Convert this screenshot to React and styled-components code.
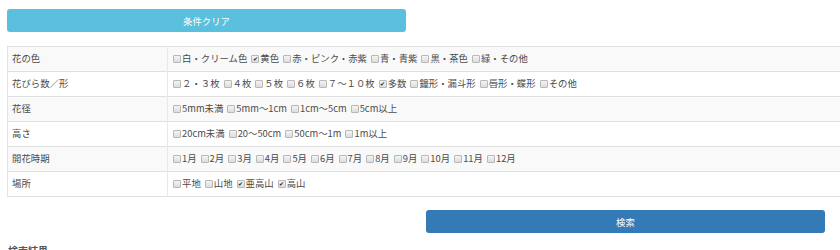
import React, { useState } from 'react';
import styled, { createGlobalStyle } from 'styled-components';

const GlobalStyle = createGlobalStyle`
  html, body {
    margin: 0;
    padding: 0;
    overflow: hidden;
    background: #fff;
  }
  body {
    font-family: "Noto Sans CJK JP", "Open Sans", sans-serif;
    font-size: 9.4px;
    color: #4a4a4a;
  }
`;

const Page = styled.div`
  padding: 9px 0 0 7px;
  width: 860px;
`;

const ButtonRow = styled.div`
  display: grid;
  grid-template-columns: 399px 399px;
  column-gap: 20px;
`;

const Button = styled.button`
  height: 23px;
  border: none;
  border-radius: 3px;
  background: ${p => p.$color};
  color: #fff;
  font-family: inherit;
  font-size: 9.4px;
  cursor: pointer;
  grid-column: ${p => p.$col};
`;

const Table = styled.table`
  width: 845px;
  border-collapse: collapse;
  margin: 14px 0 13px;
  border-left: 1px solid #e4e4e4;
`;

const Row = styled.tr`
  background: ${p => (p.$striped ? '#f9f9f9' : '#fff')};
  border-top: 1px solid #e0e0e0;
  &:last-child {
    border-bottom: 1px solid #e0e0e0;
  }
`;

const HeadCell = styled.td`
  width: 150px;
  height: 14px;
  padding: 4px 5px 6px 4px;
  line-height: 14px;
  vertical-align: top;
  border-right: 1px solid #e8e8e8;
  white-space: nowrap;
  overflow: hidden;
`;

const Cell = styled.td`
  height: 14px;
  padding: 4px 5px 6px;
  line-height: 14px;
  vertical-align: top;
  white-space: nowrap;
  overflow: hidden;
`;

const Option = styled.label`
  display: inline-block;
  height: 14px;
  line-height: 14px;
  margin-right: 4px;
  cursor: pointer;
`;

const Box = styled.span`
  display: inline-block;
  box-sizing: border-box;
  width: 8px;
  height: 8px;
  margin: 0 1px 0 0;
  vertical-align: -1px;
  border: 1px solid #b8b8b8;
  border-radius: 1px;
  background: linear-gradient(#f4f4f4, #dcdcdc);
  font-size: 6px;
  line-height: 6px;
  text-align: center;
  color: #222;
  overflow: hidden;
`;

const Heading = styled.h4`
  margin: 11px 0 0 1px;
  font-size: 10px;
  line-height: 14px;
  font-weight: bold;
  color: #555;
`;

const rows = [
  { label: '花の色', options: ['白・クリーム色', '黄色', '赤・ピンク・赤紫', '青・青紫', '黒・茶色', '緑・その他'], checked: ['黄色'] },
  { label: '花びら数／形', options: ['２・３枚', '４枚', '５枚', '６枚', '７～１０枚', '多数', '鐘形・漏斗形', '唇形・蝶形', 'その他'], checked: ['多数'] },
  { label: '花径', options: ['5mm未満', '5mm～1cm', '1cm～5cm', '5cm以上'], checked: [] },
  { label: '高さ', options: ['20cm未満', '20～50cm', '50cm～1m', '1m以上'], checked: [] },
  { label: '開花時期', options: ['1月', '2月', '3月', '4月', '5月', '6月', '7月', '8月', '9月', '10月', '11月', '12月'], checked: [] },
  { label: '場所', options: ['平地', '山地', '亜高山', '高山'], checked: ['亜高山', '高山'] },
];

function Check({ text, on, onToggle }) {
  return (
    <Option onClick={onToggle}>
      <Box>{on ? '✔' : ''}</Box>
      {text}
    </Option>
  );
}

export default function App() {
  const [state, setState] = useState(() => {
    const s = {};
    rows.forEach(r => r.checked.forEach(c => { s[r.label + c] = true; }));
    return s;
  });

  const toggle = key => setState(prev => ({ ...prev, [key]: !prev[key] }));

  return (
    <>
      <GlobalStyle />
      <Page>
        <ButtonRow>
          <Button $color="#5bc0de" $col="1" onClick={() => setState({})}>条件クリア</Button>
        </ButtonRow>
        <Table>
          <tbody>
            {rows.map((r, i) => (
              <Row key={r.label} $striped={i % 2 === 0}>
                <HeadCell>{r.label}</HeadCell>
                <Cell>
                  {r.options.map(o => (
                    <Check key={o} text={o} on={!!state[r.label + o]} onToggle={() => toggle(r.label + o)} />
                  ))}
                </Cell>
              </Row>
            ))}
          </tbody>
        </Table>
        <ButtonRow>
          <Button $color="#337ab7" $col="2">検索</Button>
        </ButtonRow>
        <Heading>検索結果</Heading>
      </Page>
    </>
  );
}
